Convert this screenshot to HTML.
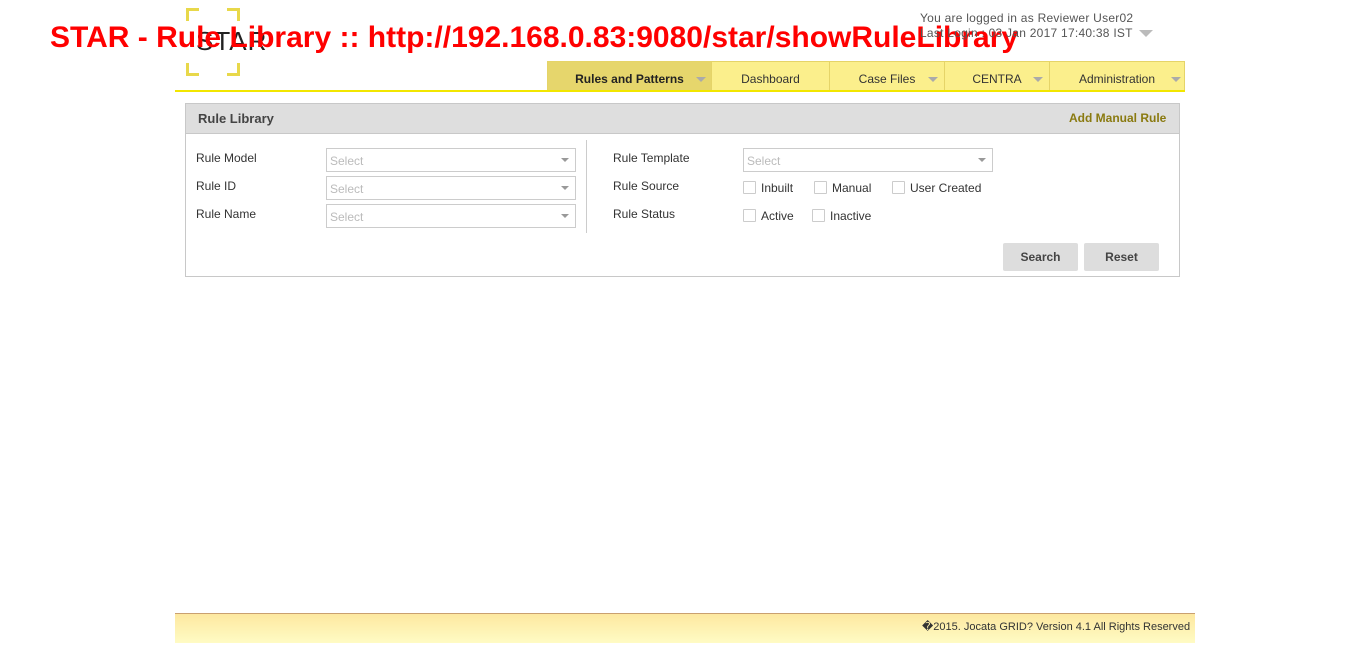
<!DOCTYPE html>
<html><head><meta charset="utf-8"><style>
body{margin:0;width:1349px;height:658px;background:#fff;font-family:"Liberation Sans",Arial,sans-serif;position:relative;overflow:hidden}
.a{position:absolute}
.br{position:absolute;width:10px;height:10px;border-color:#e8d84a;border-style:solid;border-width:0}
.nav{position:absolute;top:61px;height:30px;background:#fbef8c;border:1px solid #e5d468;border-bottom:none;font-size:12px;color:#333;line-height:34px;text-align:center;box-sizing:border-box}
.tri{display:inline-block;width:0;height:0;border-left:5px solid transparent;border-right:5px solid transparent;border-top:5px solid #aaa;position:absolute;top:15px}
.lbl{position:absolute;font-size:12px;color:#333}
.sel{position:absolute;width:250px;height:24px;border:1px solid #ccc;box-sizing:border-box;font-size:12px;color:#bbb;line-height:24px;padding-left:3px}
.sel .tri{top:9px;right:6px;border-top-color:#999;border-left-width:4px;border-right-width:4px;border-top-width:4px}
.cb{position:absolute;width:13px;height:13px;border:1px solid #ccc;box-sizing:border-box;border-radius:1px}
.btn{position:absolute;top:243px;width:75px;height:28px;background:#ddd;border-radius:2px;font-size:12px;font-weight:bold;color:#444;text-align:center;line-height:29px}
</style></head><body>
<div class="br" style="left:186px;top:8px;border-left-width:3px;border-top-width:3px"></div>
<div class="br" style="left:227px;top:8px;border-right-width:3px;border-top-width:3px"></div>
<div class="br" style="left:186px;top:63px;border-left-width:3px;border-bottom-width:3px"></div>
<div class="br" style="left:227px;top:63px;border-right-width:3px;border-bottom-width:3px"></div>
<div class="a" style="left:196px;top:26px;font-size:26px;color:#222;letter-spacing:1px">STAR</div>
<div class="a" style="left:50px;top:21px;font-size:30px;font-weight:bold;color:#f00;white-space:nowrap">STAR - Rule Library :: http://192.168.0.83:9080/star/showRuleLibrary</div>
<div class="a" style="left:920px;top:11px;font-size:12px;color:#555;line-height:15px;letter-spacing:0.25px">You are logged in as Reviewer User02<br>Last Login : 03 Jan 2017 17:40:38 IST</div>
<div class="a" style="left:1139px;top:30px;border-left:7px solid transparent;border-right:7px solid transparent;border-top:7px solid #bbb;width:0;height:0"></div>
<div class="nav" style="left:547px;width:165px;background:#e6d66c;font-weight:bold;color:#222">Rules and Patterns<span class="tri" style="right:5px"></span></div>
<div class="nav" style="left:711px;width:119px">Dashboard</div>
<div class="nav" style="left:829px;width:116px">Case Files<span class="tri" style="right:6px"></span></div>
<div class="nav" style="left:944px;width:106px">CENTRA<span class="tri" style="right:6px"></span></div>
<div class="nav" style="left:1049px;width:136px">Administration<span class="tri" style="right:3px"></span></div>
<div class="a" style="left:175px;top:90px;width:1010px;height:2px;background:#f2e600"></div>
<div class="a" style="left:185px;top:103px;width:995px;height:174px;border:1px solid #c8c8c8;box-sizing:border-box"></div>
<div class="a" style="left:186px;top:104px;width:993px;height:29px;background:#dedede;border-bottom:1px solid #c8c8c8"></div>
<div class="a" style="left:198px;top:111px;font-size:13px;font-weight:bold;color:#444">Rule Library</div>
<div class="a" style="left:1069px;top:111px;font-size:12px;font-weight:bold;color:#8a7a10">Add Manual Rule</div>
<div class="a" style="left:586px;top:140px;width:1px;height:93px;background:#ccc"></div>
<div class="lbl" style="left:196px;top:151px">Rule Model</div>
<div class="lbl" style="left:196px;top:179px">Rule ID</div>
<div class="lbl" style="left:196px;top:207px">Rule Name</div>
<div class="sel" style="left:326px;top:148px">Select<span class="tri"></span></div>
<div class="sel" style="left:326px;top:176px">Select<span class="tri"></span></div>
<div class="sel" style="left:326px;top:204px">Select<span class="tri"></span></div>
<div class="lbl" style="left:613px;top:151px">Rule Template</div>
<div class="lbl" style="left:613px;top:179px">Rule Source</div>
<div class="lbl" style="left:613px;top:207px">Rule Status</div>
<div class="sel" style="left:743px;top:148px">Select<span class="tri"></span></div>
<div class="cb" style="left:743px;top:181px"></div><div class="lbl" style="left:761px;top:181px">Inbuilt</div>
<div class="cb" style="left:814px;top:181px"></div><div class="lbl" style="left:832px;top:181px">Manual</div>
<div class="cb" style="left:892px;top:181px"></div><div class="lbl" style="left:910px;top:181px">User Created</div>
<div class="cb" style="left:743px;top:209px"></div><div class="lbl" style="left:761px;top:209px">Active</div>
<div class="cb" style="left:812px;top:209px"></div><div class="lbl" style="left:830px;top:209px">Inactive</div>
<div class="btn" style="left:1003px">Search</div>
<div class="btn" style="left:1084px">Reset</div>
<div class="a" style="left:175px;top:613px;width:1020px;height:30px;background:linear-gradient(#fde8a0,#fffbc4);border-top:1px solid #c9a070;box-sizing:border-box"></div>
<div class="a" style="left:922px;top:620px;font-size:11px;color:#333">�2015. Jocata GRID? Version 4.1 All Rights Reserved</div>
</body></html>
